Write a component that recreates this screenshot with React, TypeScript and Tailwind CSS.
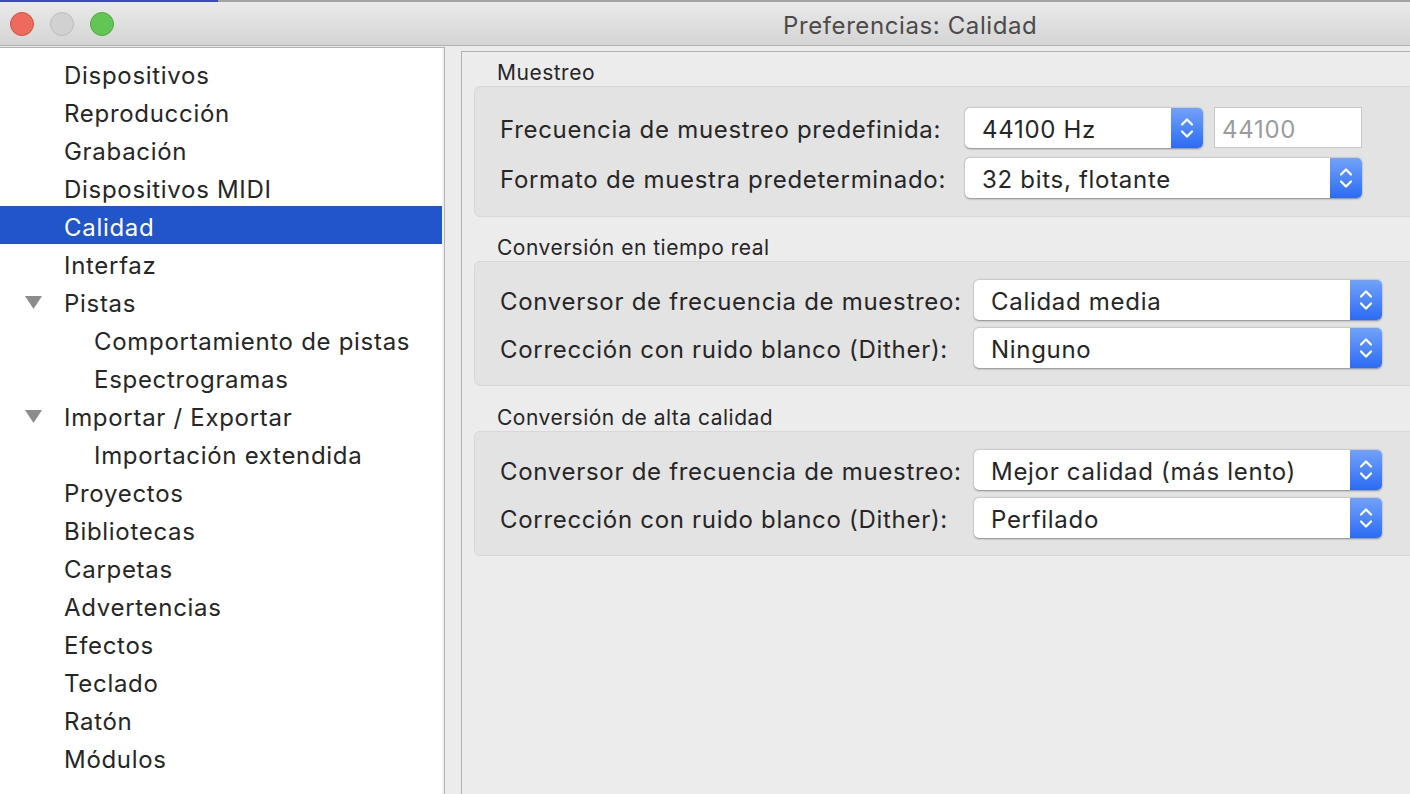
import React from "react";

const font = { fontFamily: "Inter, 'Liberation Sans', sans-serif" };

type NavItem = { label: string; depth: number; expander?: boolean; selected?: boolean };

const navItems: NavItem[] = [
  { label: "Dispositivos", depth: 0 },
  { label: "Reproducción", depth: 0 },
  { label: "Grabación", depth: 0 },
  { label: "Dispositivos MIDI", depth: 0 },
  { label: "Calidad", depth: 0, selected: true },
  { label: "Interfaz", depth: 0 },
  { label: "Pistas", depth: 0, expander: true },
  { label: "Comportamiento de pistas", depth: 1 },
  { label: "Espectrogramas", depth: 1 },
  { label: "Importar / Exportar", depth: 0, expander: true },
  { label: "Importación extendida", depth: 1 },
  { label: "Proyectos", depth: 0 },
  { label: "Bibliotecas", depth: 0 },
  { label: "Carpetas", depth: 0 },
  { label: "Advertencias", depth: 0 },
  { label: "Efectos", depth: 0 },
  { label: "Teclado", depth: 0 },
  { label: "Ratón", depth: 0 },
  { label: "Módulos", depth: 0 },
];

function Stepper() {
  return (
    <div className="flex h-full w-[32px] shrink-0 items-center justify-center rounded-r-[5px] bg-gradient-to-b from-[#72a1f8] to-[#2b6bf4]">
      <svg width="14" height="26" viewBox="0 0 14 26" fill="none">
        <path d="M2 9.5 L7 4.5 L12 9.5" stroke="white" strokeWidth="2.2" strokeLinecap="round" strokeLinejoin="round" />
        <path d="M2 16.5 L7 21.5 L12 16.5" stroke="white" strokeWidth="2.2" strokeLinecap="round" strokeLinejoin="round" />
      </svg>
    </div>
  );
}

function Popup({ value, width }: { value: string; width: string }) {
  return (
    <div
      className={`flex h-[40px] ${width} items-stretch rounded-[5px] bg-white shadow-[0_0.5px_2px_rgba(0,0,0,0.4)]`}
    >
      <div className="flex flex-1 items-center pl-[17px] pt-[4px] text-[24px] tracking-[0.7px] text-[#262626]">
        {value}
      </div>
      <Stepper />
    </div>
  );
}

function Row({ label, labelWidth, children }: { label: string; labelWidth: string; children: React.ReactNode }) {
  return (
    <div className="flex items-center">
      <div className={`${labelWidth} shrink-0 pl-[25px] pt-[4px] text-[24px] leading-[28px] tracking-[0.7px] text-[#262626]`}>
        {label}
      </div>
      {children}
    </div>
  );
}

function GroupTitle({ title, pad }: { title: string; pad: string }) {
  return (
    <div className={`${pad} pl-[23px] text-[21px] leading-[24px] tracking-[0.5px] text-[#262626]`}>{title}</div>
  );
}

export default function App() {
  return (
    <div style={font} className="flex h-[794px] w-[1410px] flex-col overflow-hidden bg-[#ececec]">
      {/* title bar */}
      <div className="flex h-[46px] shrink-0 flex-col border-b border-[#b1b1b1] bg-gradient-to-b from-[#ebebeb] to-[#d4d4d4]">
        <div className="flex h-[2px] shrink-0">
          <div className="w-[218px] bg-[#3b4cb4]" />
          <div className="flex-1 bg-[#a3a3a3]" />
        </div>
        <div className="flex flex-1 items-center">
          <div className="flex items-center gap-[16px] pl-[10px]">
            <span className="h-[24px] w-[24px] rounded-full border border-[#d6503f] bg-[#ee6a5f]" />
            <span className="h-[24px] w-[24px] rounded-full border border-[#bcbcbc] bg-[#d1d1d1]" />
            <span className="h-[24px] w-[24px] rounded-full border border-[#4fa83f] bg-[#62c655]" />
          </div>
          <div className="ml-[669px] pt-[4px] text-[24px] tracking-[0.6px] text-[#4b4b4b]">Preferencias: Calidad</div>
        </div>
      </div>

      <div className="flex flex-1 overflow-hidden">
        {/* sidebar */}
        <div className="mt-[1px] flex w-[445px] shrink-0 border-r border-t border-[#b3b3b3] bg-[#f0f0f0] pr-[2px]">
          <div className="flex-1 bg-white pt-[6px]">
            {navItems.map((item) => (
              <div
                key={item.label}
                className={`relative flex h-[38px] items-center pt-[5px] text-[24px] tracking-[0.7px] ${
                  item.selected ? "bg-[#2155c9] text-white" : "text-[#262626]"
                } ${item.depth === 1 ? "pl-[94px]" : "pl-[64px]"}`}
              >
                {item.expander && (
                  <svg className="absolute left-[25px] top-[14px]" width="17" height="13" viewBox="0 0 17 13">
                    <polygon points="0,0 17,0 8.5,13" fill="#8c8c8c" />
                  </svg>
                )}
                {item.label}
              </div>
            ))}
          </div>
        </div>

        {/* content */}
        <div className="ml-[16px] mt-[5px] flex-1 border-l border-t border-[#b0b0b0] pl-[12px]">
          <div className="w-[960px]">
            <GroupTitle title="Muestreo" pad="h-[34px] pt-[9px]" />
            <div className="flex flex-col gap-[10px] rounded-[6px] border border-[#d8d8d8] bg-[#e3e3e3] pb-[18px] pt-[20px]">
              <Row label="Frecuencia de muestreo predefinida:" labelWidth="w-[490px]">
                <Popup value="44100 Hz" width="w-[238px]" />
                <div className="ml-[11px] flex h-[41px] w-[148px] items-center border border-[#c8c8c8] bg-white pl-[7px] pt-[4px] text-[24px] tracking-[0.7px] text-[#9c9c9c]">
                  44100
                </div>
              </Row>
              <Row label="Formato de muestra predeterminado:" labelWidth="w-[490px]">
                <Popup value="32 bits, flotante" width="w-[397px]" />
              </Row>
            </div>

            <GroupTitle title="Conversión en tiempo real" pad="h-[44px] pt-[19px]" />
            <div className="flex flex-col gap-[8px] rounded-[6px] border border-[#d8d8d8] bg-[#e3e3e3] pb-[17px] pt-[18px]">
              <Row label="Conversor de frecuencia de muestreo:" labelWidth="w-[499px]">
                <Popup value="Calidad media" width="w-[408px]" />
              </Row>
              <Row label="Corrección con ruido blanco (Dither):" labelWidth="w-[499px]">
                <Popup value="Ninguno" width="w-[408px]" />
              </Row>
            </div>

            <GroupTitle title="Conversión de alta calidad" pad="h-[45px] pt-[20px]" />
            <div className="flex flex-col gap-[8px] rounded-[6px] border border-[#d8d8d8] bg-[#e3e3e3] pb-[17px] pt-[18px]">
              <Row label="Conversor de frecuencia de muestreo:" labelWidth="w-[499px]">
                <Popup value="Mejor calidad (más lento)" width="w-[408px]" />
              </Row>
              <Row label="Corrección con ruido blanco (Dither):" labelWidth="w-[499px]">
                <Popup value="Perfilado" width="w-[408px]" />
              </Row>
            </div>
          </div>
        </div>
      </div>
    </div>
  );
}
